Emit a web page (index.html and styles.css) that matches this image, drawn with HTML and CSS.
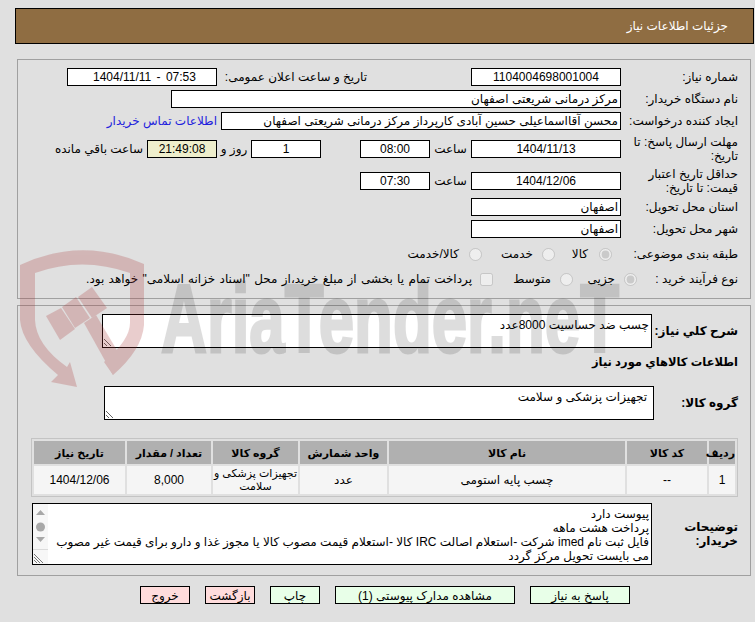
FILE: index.html
```html
<!DOCTYPE html>
<html lang="fa" dir="rtl">
<head>
<meta charset="utf-8">
<title>جزئیات اطلاعات نیاز</title>
<link rel="stylesheet" href="styles.css">
</head>
<body>
<header class="title-bar"><h1 class="title">جزئیات اطلاعات نیاز</h1></header>

<section class="panel panel-top">
  <div class="row">
    <span class="label">شماره نیاز:</span>
    <span class="field w150 center">1104004698001004</span>
    <span class="label-inline public-label">تاریخ و ساعت اعلان عمومی:</span>
    <span class="field w150 center stamp" dir="ltr">1404/11/11 - 07:53</span>
  </div>
  <div class="row">
    <span class="label">نام دستگاه خریدار:</span>
    <span class="field w450">مرکز درمانی شریعتی اصفهان</span>
  </div>
  <div class="row">
    <span class="label">ایجاد کننده درخواست:</span>
    <span class="field w400">محسن آقااسماعیلی حسین آبادی کارپرداز مرکز درمانی شریعتی اصفهان</span>
    <a class="contact" href="#">اطلاعات تماس خریدار</a>
  </div>
  <div class="row tall">
    <span class="label">مهلت ارسال پاسخ: تا تاریخ:</span>
    <span class="field w150 center">1404/11/13</span>
    <span class="hour">ساعت</span>
    <span class="field w70 center">08:00</span>
    <span class="field w70 center days">1</span>
    <span class="days-word">روز و</span>
    <span class="field w70 center timer">21:49:08</span>
    <span class="remain">ساعت باقي مانده</span>
  </div>
  <div class="row tall">
    <span class="label">حداقل تاریخ اعتبار قیمت: تا تاریخ:</span>
    <span class="field w150 center">1404/12/06</span>
    <span class="hour">ساعت</span>
    <span class="field w70 center">07:30</span>
  </div>
  <div class="row">
    <span class="label">استان محل تحویل:</span>
    <span class="field w150">اصفهان</span>
  </div>
  <div class="row">
    <span class="label">شهر محل تحویل:</span>
    <span class="field w150">اصفهان</span>
  </div>
  <div class="row option-row">
    <span class="label-cat">طبقه بندی موضوعی:</span>
    <input class="radio" type="radio" name="cat" checked disabled>
    <span class="opt opt-kala">کالا</span>
    <input class="radio" type="radio" name="cat" disabled>
    <span class="opt opt-khedmat">خدمت</span>
    <input class="radio" type="radio" name="cat" disabled>
    <span class="opt opt-both">کالا/خدمت</span>
  </div>
  <div class="row option-row last">
    <span class="label-proc">نوع فرآیند خرید :</span>
    <input class="radio" type="radio" name="proc" checked disabled>
    <span class="opt opt-jozi">جزیی</span>
    <input class="radio" type="radio" name="proc" disabled>
    <span class="opt opt-motevaset">متوسط</span>
    <input class="check" type="checkbox" disabled>
    <span class="opt opt-pay">پرداخت تمام یا بخشی از مبلغ خرید،از محل "اسناد خزانه اسلامی" خواهد بود.</span>
  </div>
</section>

<section class="panel panel-bottom">
  <div class="row-top desc-row">
    <span class="label-b w86">شرح کلي نیاز:</span>
    <textarea class="area w550 desc-area" readonly>چسب ضد حساسیت 8000عدد</textarea>
  </div>
  <h2 class="section-title">اطلاعات كالاهاي مورد نياز</h2>
  <div class="row-top">
    <span class="label-b w84">گروه کالا:</span>
    <textarea class="area w550 group-area" readonly>تجهیزات پزشکی و سلامت</textarea>
  </div>
  <table class="goods">
    <thead>
      <tr>
        <th class="c1">ردیف</th><th class="c2">کد کالا</th><th class="c3">نام کالا</th><th class="c4">واحد شمارش</th><th class="c5">گروه کالا</th><th class="c6">تعداد / مقدار</th><th class="c7">تاریخ نیاز</th>
      </tr>
    </thead>
    <tbody>
      <tr>
        <td>1</td><td>--</td><td>چسب پایه استومی</td><td>عدد</td><td class="nowrap">تجهیزات پزشکی و<br>سلامت</td><td>8,000</td><td>1404/12/06</td>
      </tr>
    </tbody>
  </table>
  <div class="row-top notes-row">
    <span class="label-b w86 notes-label">توضیحات خریدار:</span>
    <div class="notes">
      <div class="notes-text">
        <div>پیوست دارد</div>
        <div>پرداخت هشت ماهه</div>
        <div>فایل ثبت نام imed شرکت -استعلام اصالت IRC کالا -استعلام قیمت مصوب کالا یا مجوز غذا و دارو برای قیمت غیر مصوب</div>
        <div>می بایست تحویل مرکز گردد</div>
      </div>
      <div class="scrollbar">
        <svg class="scroll-svg" width="15" height="60" viewBox="0 0 15 60">
          <path d="M7.5 6 L12 11 L3 11 Z" fill="#a8a8a8"/>
          <circle cx="7.5" cy="23" r="4.5" fill="#a8a8a8"/>
          <path d="M3 33 L12 33 L7.5 38 Z" fill="#a8a8a8"/>
          <path d="M0 45.5 H15" stroke="#dcdcdc"/>
          <path d="M1 50 L10 59 M1 53 L7 59 M1 56 L4 59" stroke="#777" stroke-width="1"/>
        </svg>
      </div>
    </div>
  </div>
</section>

<nav class="actions">
  <button class="btn ok w100">پاسخ به نیاز</button>
  <button class="btn ok w180">مشاهده مدارک پیوستی (1)</button>
  <button class="btn ok w50">چاپ</button>
  <button class="btn no w50">بازگشت</button>
  <button class="btn no w50">خروج</button>
</nav>

<svg class="watermark" width="755" height="622" viewBox="0 0 755 622" aria-hidden="true">
  <g class="mark-red">
    <path d="M20 265 Q82 236 144 264 L144 325 Q142 350 113 375 L104 362 Q130 340 130 323 L130 273 Q82 256 35 273 L35 320 Q36 345 67 367 L70 362 L77 387 L51 382 L58 375 Q22 345 20 320 Z"/>
    <path d="M46 316 L61 308 L75 329 L60 340 Z"/>
    <path d="M62 307 L76 297 L90 318 L75 328 Z"/>
    <path d="M78 297 L92 287 L107 308 L92 318 Z"/>
    <path d="M84 323 L96 315 L118 352 L113 375 Z"/>
  </g>
  <text class="mark-text" x="161" y="352" textLength="458" lengthAdjust="spacingAndGlyphs" direction="ltr">AriaTender.neT</text>
</svg>
</body>
</html>
```
FILE: styles.css
```css
* { box-sizing: border-box; }
html, body { margin: 0; }
body {
  width: 755px;
  height: 622px;
  overflow: hidden;
  padding: 8px 1px 0 15px;
  background: #e0e0e0;
  color: #000;
  font: 12px/14px "Liberation Sans", "DejaVu Sans", sans-serif;
  position: relative;
}
.title-bar {
  height: 36px;
  border: 1px solid #000;
  background: #8f6d42;
  display: flex;
  align-items: center;
  padding-right: 25px;
}
.title { margin: 0; font: inherit; color: #fff; }
.panel { border: 1px solid #a0a0a0; margin: 0 3px 0 0; margin-left: 2px; padding: 0 12px 0 0; }
.panel-top { margin-top: 15px; height: 240px; padding-top: 8px; }
.panel-bottom { margin-top: 6px; height: 271px; padding-top: 8px; }
.row { display: flex; align-items: center; min-height: 18px; margin-bottom: 4px; }
.row.tall { height: 30px; margin-bottom: 2px; }
.option-row { height: 24px; margin-bottom: 1px; }
.label { width: 117px; padding-left: 4px; flex: none; }
.field {
  display: flex;
  align-items: center;
  height: 18px;
  border: 1px solid #000;
  background: #fff;
  padding: 0 2px;
  white-space: nowrap;
  overflow: hidden;
  flex: none;
}
.field.center { justify-content: center; }
.stamp { word-spacing: 2px; padding-left: 5px; padding-right: 0; }
.w150 { width: 150px; }
.w70 { width: 70px; }
.w400 { width: 400px; }
.w450 { width: 450px; }
.public-label { margin-right: 104px; width: 150px; flex: none; }
.contact { color: #2222dd; text-decoration: none; margin-right: 4px; white-space: nowrap; }
.hour { width: 41px; text-align: center; flex: none; }
.days { margin-right: 39px; }
.days-word { width: 34px; text-align: center; flex: none; }
.timer { background: #eeeecc; }
.remain { margin-right: 4px; white-space: nowrap; }
.label-cat { width: 126px; flex: none; }
.label-proc { width: 101px; flex: none; }
.radio, .check { margin: 0; width: 13px; height: 13px; flex: none; }
.opt { white-space: nowrap; flex: none; }
.opt-kala { margin-right: 11px; width: 33px; }
.opt-khedmat { margin-right: 9px; width: 51px; }
.opt-both { margin-right: 10px; }
.opt-jozi { margin-right: 9px; width: 42px; }
.opt-motevaset { margin-right: 9px; width: 58px; }
.opt-pay { margin-right: 8px; word-spacing: 1px; }
.row-top { display: flex; align-items: center; }
.label-b { font-weight: bold; flex: none; }
.w86 { width: 86px; }
.w84 { width: 84px; }
.w550 { width: 550px; }
.area {
  display: block;
  height: 34px;
  border: 1px solid #000;
  background: #fff;
  border-radius: 0;
  padding: 3px 6px 0;
  margin: 0;
  font: inherit;
  color: #000;
  outline: none;
  overflow: hidden;
  resize: both;
  flex: none;
}
.desc-area { padding: 3px 2px 0; }
.section-title { margin: 6px 0 16px; font: bold 11.5px/16px "Liberation Sans", "DejaVu Sans", sans-serif; }
.goods {
  margin: 18px 0 0 0;
  width: 707px;
  table-layout: fixed;
  border-collapse: separate;
  border-spacing: 2px;
  border: 1px solid #c4c4c4;
}
.goods th { height: 23px; background: #b0b0b0; padding: 0; font-size: 11px; font-weight: bold; text-align: center; }
.goods td { height: 28px; background: #f5f5f5; padding: 0; text-align: center; line-height: 13px; }
.goods td.nowrap { white-space: nowrap; font-size: 11px; }
.c1 { width: 26px; } .c2 { width: 80px; } .c3 { width: 236px; } .c4 { width: 87px; }
.c5 { width: 85px; } .c6 { width: 84px; } .c7 { width: 91px; }
.notes-row { margin-top: 6px; }
.notes {
  width: 620px;
  height: 62px;
  border: 1px solid #000;
  background: #fff;
  display: flex;
  overflow: hidden;
  flex: none;
}
.notes-text { flex: 1; padding: 3px 2px 0 0; min-width: 0; }
.scrollbar { width: 15px; flex: none; background: #f7f7f7; }
.scroll-svg { display: block; }
.actions { display: flex; gap: 15px; margin-top: 10px; padding-right: 124px; }
.btn {
  height: 18px;
  padding: 2px 0 0;
  border: 1px solid #000;
  font: inherit;
  color: #000;
  border-radius: 0;
}
.btn.ok { background: #e8ffe8; }
.btn.no { background: #ffdcdc; }
.w100 { width: 100px; }
.w180 { width: 180px; }
.w50 { width: 50px; }
.watermark { position: absolute; left: 0; top: 0; pointer-events: none; }
.mark-red { fill: #a83232; opacity: 0.24; }
.mark-text { font: bold 96px "Liberation Sans", sans-serif; fill: #000; stroke: #000; stroke-width: 3px; opacity: 0.13; }
```
